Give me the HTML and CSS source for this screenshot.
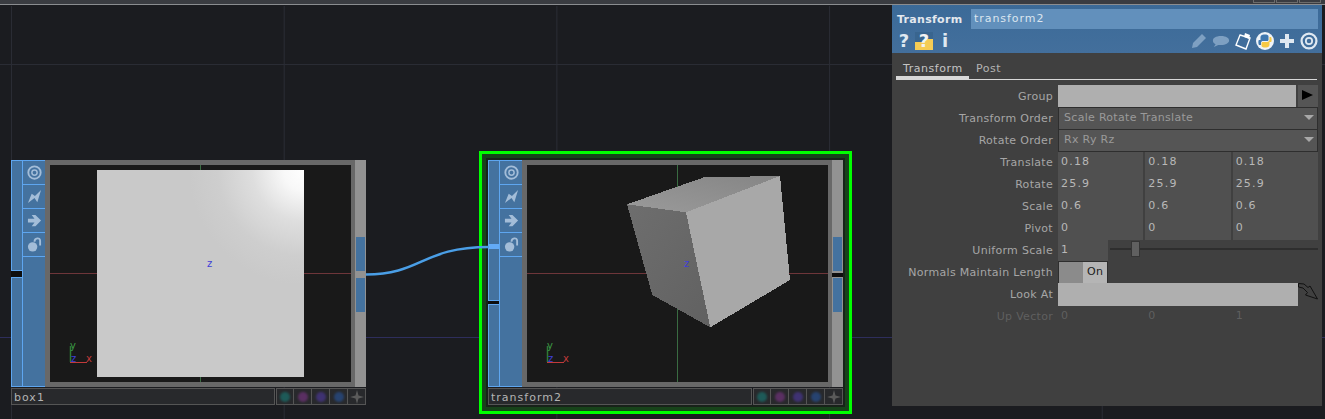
FILE: index.html
```html
<!DOCTYPE html>
<html lang="en">
<head>
  <meta charset="UTF-8">
  <title>Transform</title>
  <link rel="stylesheet" href="styles.css">
</head>
<body>
  <svg class="sprite">
    <symbol id="iconTarget" viewBox="0 0 16 16">
      <circle cx="8" cy="8" r="6.6" fill="none" stroke="currentColor" stroke-width="2"/>
      <circle cx="8" cy="8" r="2.8" fill="none" stroke="currentColor" stroke-width="1.6"/>
    </symbol>
    <symbol id="iconBolt" viewBox="0 0 16 16">
      <path d="M1 15 L5 5 L8.5 7.5 L15 1 L11 14 L8 9.5 Z" fill="currentColor"/>
    </symbol>
    <symbol id="iconArrow" viewBox="0 0 16 16">
      <path d="M1 6 H8 L5 2 H9 L15 8 L9 14 H5 L8 10 H1 Z" fill="currentColor"/>
    </symbol>
    <symbol id="iconLock" viewBox="0 0 16 16">
      <circle cx="6" cy="10.5" r="5" fill="currentColor"/>
      <path d="M8 5 C8 1 14 0 14 4 V9" fill="none" stroke="currentColor" stroke-width="2"/>
    </symbol>
    <symbol id="iconStar" viewBox="0 0 14 14">
      <path d="M7 0 L8.500 5.500 L14 7 L8.500 8.500 L7 14 L5.500 8.500 L0 7 L5.500 5.500 Z" fill="currentColor"/>
    </symbol>
  </svg>

  <div class="topbar">
    <span class="topbox"></span>
    <span class="topbox"></span>
    <span class="topbox"></span>
  </div>

  <div class="network">
    <svg class="wire" width="892" height="414">
      <path d="M355 269.500 C411 269.500 411 242 478 242" fill="none" stroke="#4a9ee6" stroke-width="2.500"/>
    </svg>

    <!-- box1 -->
    <div class="node node-box">
      <div class="node-body">
        <div class="inputs">
          <div class="in-seg in-top"></div>
          <div class="in-notch"></div>
          <div class="in-seg in-rest"></div>
        </div>
        <div class="flags">
          <div class="flag"><svg class="flag-icon"><use href="#iconTarget"/></svg></div>
          <div class="flag"><svg class="flag-icon"><use href="#iconBolt"/></svg></div>
          <div class="flag"><svg class="flag-icon"><use href="#iconArrow"/></svg></div>
          <div class="flag"><svg class="flag-icon"><use href="#iconLock"/></svg></div>
          <div class="flag-rest"></div>
        </div>
        <div class="frame">
          <svg class="viewer" viewBox="0 0 301 217">
            <defs>
              <radialGradient id="planeShade" gradientUnits="userSpaceOnUse" cx="254" cy="5" r="115">
                <stop offset="0" stop-color="#ffffff"/>
                <stop offset="0.18" stop-color="#f8f8f8"/>
                <stop offset="0.45" stop-color="#dedede"/>
                <stop offset="0.75" stop-color="#cecece"/>
                <stop offset="1" stop-color="#c9c9c9"/>
              </radialGradient>
            </defs>
            <line class="axis-x" x1="0" y1="108.5" x2="301" y2="108.5"/>
            <line class="axis-y" x1="150.5" y1="0" x2="150.5" y2="217"/>
            <rect x="47" y="5" width="207" height="207" fill="url(#planeShade)"/>
            <text class="lbl-z" x="157" y="102">z</text>
            <line class="gn-y" x1="20.5" y1="181" x2="20.5" y2="197"/>
            <line class="gn-x" x1="20" y1="197.5" x2="37" y2="197.5"/>
            <text class="lbl-y" x="20" y="184">y</text>
            <text class="lbl-z" x="21" y="197">z</text>
            <text class="lbl-x" x="36" y="197">x</text>
          </svg>
        </div>
        <div class="outputs">
          <div class="out-block"></div>
          <div class="out-gap"></div>
          <div class="out-block"></div>
        </div>
      </div>
      <div class="node-bar">
        <div class="node-name">box1</div>
        <div class="viewer-btn"><span class="dot dot-teal"></span></div>
        <div class="viewer-btn"><span class="dot dot-pink"></span></div>
        <div class="viewer-btn"><span class="dot dot-purple"></span></div>
        <div class="viewer-btn"><span class="dot dot-blue"></span></div>
        <div class="viewer-btn"><svg class="star"><use href="#iconStar"/></svg></div>
      </div>
    </div>

    <!-- transform2, selected -->
    <div class="node node-transform">
      <div class="node-body">
        <div class="inputs">
          <div class="in-seg in-top"><span class="in-wire"></span></div>
          <div class="in-notch"></div>
          <div class="in-seg in-rest"></div>
        </div>
        <div class="flags">
          <div class="flag"><svg class="flag-icon"><use href="#iconTarget"/></svg></div>
          <div class="flag"><svg class="flag-icon"><use href="#iconBolt"/></svg></div>
          <div class="flag"><svg class="flag-icon"><use href="#iconArrow"/></svg></div>
          <div class="flag"><svg class="flag-icon"><use href="#iconLock"/></svg></div>
          <div class="flag-rest"></div>
        </div>
        <div class="frame">
          <svg class="viewer" viewBox="0 0 301 217">
            <defs>
              <linearGradient id="cubeTop" x1="0" y1="1" x2="1" y2="0">
                <stop offset="0" stop-color="#9a9a9a"/>
                <stop offset="1" stop-color="#858585"/>
              </linearGradient>
              <linearGradient id="cubeLeft" x1="0" y1="0" x2="1" y2="1">
                <stop offset="0" stop-color="#6e6e6e"/>
                <stop offset="1" stop-color="#616161"/>
              </linearGradient>
            </defs>
            <line class="axis-x" x1="0" y1="108.5" x2="301" y2="108.5"/>
            <line class="axis-y" x1="150.5" y1="0" x2="150.5" y2="217"/>
            <g shape-rendering="crispEdges">
              <polygon points="100,39.3 177,12.3 253,11 159,47.3" fill="url(#cubeTop)"/>
              <polygon points="159,47.3 253,11 263,115 183.3,162.3" fill="#a8a8a8"/>
              <polygon points="100,39.3 159,47.3 183.3,162.3 125.3,130" fill="url(#cubeLeft)"/>
            </g>
            <text class="lbl-z" x="157" y="102">z</text>
            <line class="gn-y" x1="20.5" y1="181" x2="20.5" y2="197"/>
            <line class="gn-x" x1="20" y1="197.5" x2="37" y2="197.5"/>
            <text class="lbl-y" x="20" y="184">y</text>
            <text class="lbl-z" x="21" y="197">z</text>
            <text class="lbl-x" x="36" y="197">x</text>
          </svg>
        </div>
        <div class="outputs">
          <div class="out-block"></div>
          <div class="out-gap out-gap-dark"></div>
          <div class="out-block"></div>
        </div>
      </div>
      <div class="node-bar">
        <div class="node-name">transform2</div>
        <div class="viewer-btn"><span class="dot dot-teal"></span></div>
        <div class="viewer-btn"><span class="dot dot-pink"></span></div>
        <div class="viewer-btn"><span class="dot dot-purple"></span></div>
        <div class="viewer-btn"><span class="dot dot-blue"></span></div>
        <div class="viewer-btn"><svg class="star"><use href="#iconStar"/></svg></div>
      </div>
    </div>

    <!-- parameter dialog -->
    <div class="panel">
      <div class="panel-head">
        <div class="head-row">
          <span class="op-type">Transform</span>
          <span class="op-name">transform2</span>
        </div>
        <div class="tool-row">
          <span class="help">?</span>
          <svg class="tool" viewBox="0 0 18 18">
            <rect x="0" y="0" width="18" height="18" fill="#39658f"/>
            <path d="M0 10 H8 L11 7 H18 V18 H0 Z" fill="#f5cc55"/>
          </svg>
          <span class="help help-over">?</span>
          <span class="help help-i">i</span>
          <span class="tool-gap"></span>
          <svg class="tool" viewBox="0 0 18 18">
            <path d="M2 16 L3 11 L12 2 L16 6 L7 15 Z" fill="#7ea0c2"/>
          </svg>
          <svg class="tool tool-wide" viewBox="0 0 20 14">
            <path d="M10 1 C16 1 19 3.500 19 6 C19 9 15 11 10 11 L7 11 L2 13 L4 10 C2 9 1 8 1 6 C1 3.500 4 1 10 1 Z" fill="#7ea0c2"/>
          </svg>
          <svg class="tool" viewBox="0 0 18 18">
            <path d="M6 3 L16 6 L12 17 L2 13 Z" fill="none" stroke="#fff" stroke-width="1.400"/>
            <path d="M11 1 L16 3 L15 7 L10 5 Z" fill="#fff"/>
          </svg>
          <svg class="tool" viewBox="0 0 18 18">
            <circle cx="9" cy="9" r="9" fill="#eef3f8"/>
            <path d="M9 2.500 C5 2.500 4.500 4 4.500 6 V8 H2.800 C2.200 9 2.200 12 3 13 H5 V10.800 C5 9.500 6 9 7 9 H11 C12 9 12.500 8.500 12.500 7.500 V4.500 C12.500 3 11 2.500 9 2.500 Z" fill="#3f78b0"/>
            <path d="M9 15.500 C13 15.500 13.500 14 13.500 12 V10 H15.200 C15.800 9 15.800 6 15 5 H13.500 V7.500 C13.500 9 12.500 10 11 10 H7 C6 10 5.500 10.500 5.500 11.500 V13.500 C5.500 15 7 15.500 9 15.500 Z" fill="#f6c945"/>
          </svg>
          <svg class="tool" viewBox="0 0 18 18">
            <path d="M7 2 H11 V7 H16 V11 H11 V16 H7 V11 H2 V7 H7 Z" fill="#dfe8f1"/>
          </svg>
          <svg class="tool tool-target" viewBox="0 0 16 16"><use href="#iconTarget"/></svg>
        </div>
      </div>

      <div class="tabs">
        <span class="tab tab-active">Transform</span>
        <span class="tab">Post</span>
      </div>

      <div class="params">
        <div class="param">
          <label class="param-label">Group</label>
          <div class="fields">
            <div class="field-op"></div>
            <div class="go-btn"></div>
          </div>
        </div>
        <div class="param">
          <label class="param-label">Transform Order</label>
          <div class="dropdown">Scale Rotate Translate</div>
        </div>
        <div class="param">
          <label class="param-label">Rotate Order</label>
          <div class="dropdown">Rx Ry Rz</div>
        </div>
        <div class="param">
          <label class="param-label">Translate</label>
          <div class="fields">
            <div class="field">0.18</div><div class="field">0.18</div><div class="field">0.18</div>
          </div>
        </div>
        <div class="param">
          <label class="param-label">Rotate</label>
          <div class="fields">
            <div class="field">25.9</div><div class="field">25.9</div><div class="field">25.9</div>
          </div>
        </div>
        <div class="param">
          <label class="param-label">Scale</label>
          <div class="fields">
            <div class="field">0.6</div><div class="field">0.6</div><div class="field">0.6</div>
          </div>
        </div>
        <div class="param">
          <label class="param-label">Pivot</label>
          <div class="fields">
            <div class="field">0</div><div class="field">0</div><div class="field">0</div>
          </div>
        </div>
        <div class="param">
          <label class="param-label">Uniform Scale</label>
          <div class="fields">
            <div class="field field-short">1</div>
            <div class="slider"><span class="slider-knob"></span></div>
          </div>
        </div>
        <div class="param">
          <label class="param-label">Normals Maintain Length</label>
          <div class="toggle">
            <span class="toggle-off"></span>
            <span class="toggle-on">On</span>
          </div>
        </div>
        <div class="param">
          <label class="param-label">Look At</label>
          <div class="fields">
            <div class="field-op"></div>
            <svg class="lookat-icon" viewBox="0 0 20 20">
              <path d="M0.500 0.500 L6 1 L10 4.500 L12 3 L19.500 16 L7.500 12 L9.500 9.500 L5 5 L0.500 4 Z" fill="none" stroke="#111" stroke-width="1"/>
            </svg>
          </div>
        </div>
        <div class="param param-disabled">
          <label class="param-label">Up Vector</label>
          <div class="fields">
            <div class="field">0</div><div class="field">0</div><div class="field">1</div>
          </div>
        </div>
      </div>
    </div>
  </div>
</body>
</html>
```

FILE: styles.css
```css
* {
  box-sizing: border-box;
}

html, body {
  height: 100%;
}

body {
  margin: 0;
  display: flex;
  flex-direction: column;
  overflow: hidden;
  background: #1b1c20;
  font-family: "DejaVu Sans", sans-serif;
  font-size: 11px;
}

.sprite {
  display: none;
}

.topbar {
  display: flex;
  justify-content: flex-end;
  gap: 1px;
  height: 5px;
  padding-right: 4px;
  background: #3a3c41;
  border-bottom: 1px solid #8b8d90;
}

.topbox {
  width: 22px;
  height: 3px;
  border: 1px solid #6c6c6c;
  border-top: none;
}

.network {
  position: relative;
  flex: 1;
  background-color: #1b1c20;
  background-image:
    linear-gradient(#2e2e5c, #2e2e5c),
    linear-gradient(#2a2c34, #2a2c34),
    linear-gradient(90deg, #2a2c34 1px, transparent 1px);
  background-size: 100% 1px, 100% 1px, 272.7px 100%;
  background-position: 0 332px, 0 59px, 11px 1px;
  background-repeat: no-repeat, no-repeat, repeat-x;
}

.wire {
  position: absolute;
  top: 0;
  left: 11px;
  z-index: 3;
  pointer-events: none;
}

/* nodes */
.node {
  position: absolute;
  top: 155px;
  width: 355px;
  height: 245px;
  display: flex;
  flex-direction: column;
  gap: 1px;
}

.node-box {
  left: 11px;
}

.node-transform {
  left: 488px;
  box-shadow: 0 0 0 2px #18221a, 0 0 0 6px #17431a, 0 0 0 9px #00ff00;
}

.node-body {
  display: flex;
  height: 227px;
}

.inputs {
  width: 11px;
  display: flex;
  flex-direction: column;
}

.in-seg {
  position: relative;
  background: #44729f;
  border: 1px solid #5ea6f0;
  border-right: none;
}

.in-top {
  height: 111px;
}

.node-transform .in-top {
  height: 141px;
}

.in-notch {
  height: 6px;
  background: #0e0e0e;
}

.node-transform .in-notch {
  height: 3px;
}

.in-rest {
  flex: 1;
}

.in-wire {
  position: absolute;
  top: 83px;
  left: -1px;
  width: 11px;
  height: 5px;
  background: #63aaf5;
}

.flags {
  width: 24px;
  display: flex;
  flex-direction: column;
  background: #44729f;
  border: 1px solid #5ea6f0;
}

.flag {
  height: 24px;
  display: flex;
  align-items: center;
  justify-content: center;
  border-bottom: 1px solid #5ea6f0;
  color: #a3bdd8;
}

.flag-rest {
  flex: 1;
}

.flag-icon {
  width: 15px;
  height: 15px;
}

.frame {
  width: 310px;
  padding: 5px 4px 4px 5px;
  background: #686868;
  margin-left: -1px;
}

.viewer {
  display: block;
  width: 301px;
  height: 217px;
  background: #191919;
}

.axis-x {
  stroke: #6e363a;
}

.axis-y {
  stroke: #3a6c42;
}

.gn-y {
  stroke: #2f7a35;
  stroke-width: 1.500;
}

.gn-x {
  stroke: #c23a3a;
}

.viewer text {
  font-family: "DejaVu Sans", sans-serif;
  font-size: 10px;
}

.lbl-z {
  fill: #3f3fd8;
}

.lbl-y {
  fill: #3c9a44;
}

.lbl-x {
  fill: #c23a3a;
}

.outputs {
  width: 11px;
  padding: 77px 1px 0;
  background: #929292;
}

.out-block {
  height: 34px;
  background: #44729f;
}

.out-gap {
  height: 7px;
}

.out-gap-dark {
  margin: 0 -1px;
  border-top: 2px solid #929292;
  border-bottom: 1px solid #929292;
  background: #0e0e0e;
}

.node-bar {
  display: flex;
  height: 17px;
}

.node-name {
  width: 264px;
  margin-right: 1px;
  padding-left: 2px;
  line-height: 17px;
  color: #b4b4b4;
  letter-spacing: 1px;
  background: #28292c;
  border: 1px solid #555;
}

.viewer-btn {
  width: 18px;
  display: flex;
  align-items: center;
  justify-content: center;
  background: #28292c;
  border: 1px solid #555;
  border-left-width: 0;
}

.viewer-btn:nth-child(2) {
  border-left-width: 1px;
}

.dot {
  width: 10px;
  height: 10px;
  border-radius: 50%;
  filter: blur(1px);
}

.dot-teal {
  background: #1e5a58;
}

.dot-pink {
  background: #5a2f62;
}

.dot-purple {
  background: #3f3272;
}

.dot-blue {
  background: #274370;
}

.star {
  width: 14px;
  height: 14px;
  color: #5a5a5a;
}

/* parameter dialog */
.panel {
  position: absolute;
  top: 0;
  left: 892px;
  z-index: 4;
  width: 430px;
  height: 401px;
  background: #404040;
  color: #a6a6a6;
  letter-spacing: 0.3px;
}

.panel-head {
  height: 48px;
  padding: 4px 4px 0 5px;
  background: linear-gradient(#3b6a98, #436f9c);
}

.head-row {
  display: flex;
  align-items: center;
  height: 20px;
}

.op-type {
  width: 74px;
  font-weight: bold;
  color: #e3e8ee;
}

.op-name {
  flex: 1;
  height: 20px;
  padding-left: 3px;
  line-height: 19px;
  letter-spacing: 0.95px;
  color: #dbe5ef;
  background: #6290bc;
}

.tool-row {
  display: flex;
  align-items: center;
  gap: 4px;
  height: 24px;
  position: relative;
}

.help {
  width: 14px;
  font-size: 18px;
  font-weight: bold;
  line-height: 20px;
  text-align: center;
  letter-spacing: 0;
  color: #dfe8f1;
}

.help-over {
  position: absolute;
  left: 18px;
  top: 2px;
  width: 18px;
  color: #f2f2f2;
}

.help-i {
  margin-left: 1px;
}

.tool-gap {
  flex: 1;
}

.tool {
  width: 18px;
  height: 18px;
  flex: none;
}

.tool-wide {
  height: 13px;
}

.tool-target {
  color: #dfe8f1;
}

.tabs {
  display: flex;
  margin: 7px 5px 0 4px;
  height: 20px;
  border-bottom: 1px solid #d8d8d8;
}

.tab {
  padding: 1px 8px 0 7px;
  line-height: 15px;
  letter-spacing: 0.55px;
  color: #b4b4b4;
}

.tab-active {
  width: 73px;
  height: 20px;
  border-bottom: 4px solid #d8d8d8;
  color: #c4c4c4;
}

.params {
  display: flex;
  flex-direction: column;
  gap: 2px;
  margin-top: 5px;
}

.param {
  display: grid;
  grid-template-columns: 161px 260px;
  column-gap: 5px;
  height: 20px;
}

.param-label {
  line-height: 23px;
  text-align: right;
  white-space: nowrap;
}

.param-disabled {
  color: #5f5f5f;
}

.fields {
  display: flex;
  gap: 2px;
}

.field {
  flex: 1;
  padding-left: 3px;
  line-height: 21px;
  letter-spacing: 1.2px;
  background: #505050;
  color: #b8b8b8;
}

.param-disabled .field {
  background: none;
  color: #5f5f5f;
}

.field-short {
  flex: none;
  width: 50px;
}

.field-op {
  flex: 1;
  background: #afafaf;
}

.go-btn {
  position: relative;
  width: 20px;
  background: #555;
}

.go-btn::after {
  content: "";
  position: absolute;
  top: 5px;
  left: 4px;
  border-left: 11px solid #000;
  border-top: 5px solid transparent;
  border-bottom: 5px solid transparent;
}

.lookat-icon {
  width: 20px;
  height: 20px;
  margin-left: -2px;
}

.dropdown {
  position: relative;
  padding-left: 5px;
  line-height: 20px;
  color: #9a9a9a;
  background: #555;
  border: 1px solid #2e2e2e;
}

.dropdown::after {
  content: "";
  position: absolute;
  top: 7px;
  right: 3px;
  border-top: 5px solid #a8a8a8;
  border-left: 5px solid transparent;
  border-right: 5px solid transparent;
}

.slider {
  position: relative;
  flex: 1;
}

.slider::before {
  content: "";
  position: absolute;
  top: 9px;
  left: 0;
  right: 0;
  height: 2px;
  background: #2e2e2e;
}

.slider-knob {
  position: absolute;
  top: 2px;
  left: 21px;
  width: 9px;
  height: 16px;
  background: #606060;
  border: 1px solid #353535;
}

.toggle {
  display: flex;
  width: 50px;
  background: #2e2e2e;
  padding: 1px;
}

.toggle-off {
  width: 24px;
  background: #8b8b8b;
}

.toggle-on {
  flex: 1;
  padding-left: 4px;
  line-height: 20px;
  color: #1c1c1c;
  background: #b5b5b5;
}
```
